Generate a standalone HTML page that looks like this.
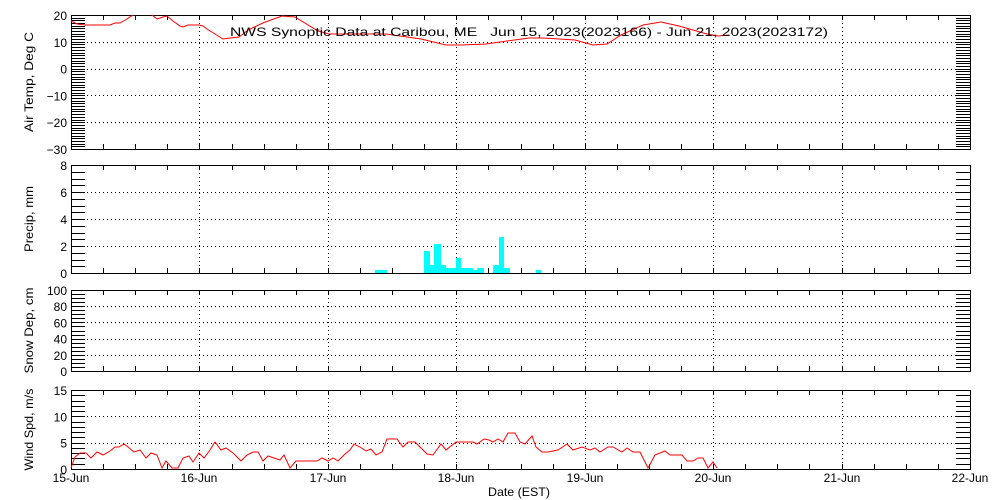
<!DOCTYPE html>
<html><head><meta charset="utf-8"><style>
html,body{margin:0;padding:0;background:#fff;width:1000px;height:500px;overflow:hidden}
svg{display:block}
text{font-family:"Liberation Sans",sans-serif;font-size:12px;fill:#000}
</style></head><body>
<svg id="s" width="1000" height="500" xmlns="http://www.w3.org/2000/svg"></svg>
<script>
var s=document.getElementById('s'),h='';
var X0=71,X1=970,D=(X1-X0)/7;
function L(x1,y1,x2,y2,extra){h+='<line x1="'+x1+'" y1="'+y1+'" x2="'+x2+'" y2="'+y2+'" stroke="#000" stroke-width="1" '+(extra||'')+'/>';}
function T(x,y,t,a){h+='<text x="'+x+'" y="'+y+'" text-anchor="'+(a||'end')+'">'+t+'</text>';}
function panel(top,bot,vmin,vmax,major,minor,label,labs,lw){
  var sc=(bot-top)/(vmax-vmin);
  function Y(v){return bot-(v-vmin)*sc;}
  for(var d=1;d<7;d++){var x=Math.round(X0+d*D)+.5;L(x,top,x,bot,'stroke-dasharray="1,3"');}
  for(var v=vmin+major;v<vmax-1e-6;v+=major){var y=Math.round(Y(v))+.5;L(X0,y,X1,y,'stroke-dasharray="1,3"');}
  for(var v=vmin;v<=vmax+1e-6;v+=minor){var y=Math.round(Y(v))+.5;L(X0,y,X0+14,y);L(X1-14,y,X1,y);}
  for(var i=1;i<28;i++){var x=Math.round(X0+i*D/4)+.5;L(x,top,x,top+5);L(x,bot-5,x,bot);}
  h+='<rect x="'+(X0+.5)+'" y="'+(top+.5)+'" width="'+(X1-X0)+'" height="'+(bot-top)+'" fill="none" stroke="#000"/>';
  for(var i=0;i<labs.length;i++){var v=labs[i];T(67,Y(v)+5,(v<0?'\u2212'+(-v):v));}
  h+='<text transform="translate(33,'+((top+bot)/2)+') rotate(-90)" text-anchor="middle" textLength="'+lw+'" lengthAdjust="spacingAndGlyphs">'+label+'</text>';
  return Y;
}
var Y1=panel(15,149,-30,20,10,1,'Air Temp, Deg C',[20,10,0,-10,-20,-30],100);
var Y2=panel(165,273,0,8,2,0.5,'Precip, mm',[8,6,4,2,0],66);
var Y3=panel(290,371,0,100,20,5,'Snow Dep, cm',[100,80,60,40,20,0],86);
var Y4=panel(390,469,0,15,5,1,'Wind Spd, m/s',[15,10,5,0],82);
var bars=[[375,387,270],[424,430,251],[430,434,265],[434,441,244],[441,446,265],[446,456,268],[456,461,258],[461,473,268],[473,477,270],[477,484,268],[493,499,265],[499,504,237],[504,510,268],[536,541,270]];
bars.forEach(function(b){h+='<rect x="'+b[0]+'" y="'+b[2]+'" width="'+(b[1]-b[0])+'" height="'+(273-b[2])+'" fill="#00ffff"/>';});
var tp=[[71,21],[77,24],[85,25],[110,25],[115,23],[120,23],[127,19],[133,15],[135,13],[150,13],[152,15],[157,19],[163,17],[167,16],[173,21],[180,26],[183,27],[188,25],[199,25],[203,26],[207,29],[215,34],[223,39],[230,38],[239,37],[248,30],[264,22.5],[282,16],[295,17],[318,31],[329,34],[361,34],[386,34],[400,36],[421,39],[446,45],[461,45],[486,44],[507,41],[529,38],[543,38],[575,40],[593,45],[607,44],[621,35],[643,25],[661,22],[679,26],[707,34],[718,36],[729,35]];
h+='<svg x="71" y="15" width="899" height="134" viewBox="71 15 899 134" overflow="hidden"><polyline fill="none" stroke="#f00" stroke-width="1" points="'+tp.map(function(p){return p.join(',')}).join(' ')+'"/></svg>';
var wp=[[71,468],[75,457],[80,453],[86,453],[91,458],[97,452],[103,455],[110,451],[115,447],[119,447],[124,444],[128,447],[134,452],[140,450],[146,458],[151,453],[157,455],[162,468],[166,461],[172,468],[178,468],[183,458],[189,456],[193,462],[199,453],[204,458],[210,450],[215,442],[221,450],[226,448],[233,453],[241,461],[247,455],[253,452],[258,452],[263,461],[268,456],[280,460],[284,455],[290,468],[296,461],[317,461],[322,458],[328,461],[333,458],[338,461],[345,454],[350,450],[354,444],[360,447],[366,451],[371,449],[376,455],[382,452],[387,439],[397,439],[403,447],[408,442],[415,442],[420,447],[427,454],[433,455],[441,444],[446,450],[456,442],[473,442],[477,444],[484,439],[489,440],[493,442],[498,439],[503,442],[508,433],[515,433],[520,442],[525,444],[532,436],[536,447],[542,452],[548,452],[558,450],[567,444],[573,450],[582,447],[590,450],[595,448],[600,452],[608,447],[613,447],[622,452],[627,448],[633,452],[640,452],[648,468],[655,455],[665,451],[670,455],[682,455],[687,461],[693,461],[698,458],[703,458],[708,468],[713,462],[717,468]];
h+='<polyline fill="none" stroke="#f00" stroke-width="1" points="'+wp.map(function(p){return p.join(',')}).join(' ')+'"/>';
var days=['15-Jun','16-Jun','17-Jun','18-Jun','19-Jun','20-Jun','21-Jun','22-Jun'];
for(var d=0;d<8;d++)T(Math.round(X0+d*D),482,days[d],'middle');
h+='<text x="488" y="496" textLength="62" lengthAdjust="spacingAndGlyphs">Date (EST)</text>'.replace('<text','<text text-anchor="start"');
h+='<text x="230" y="36" text-anchor="start" textLength="598" lengthAdjust="spacingAndGlyphs">NWS Synoptic Data at Caribou, ME&#160;&#160;&#160;Jun 15, 2023(2023166) - Jun 21, 2023(2023172)</text>';
s.innerHTML=h;
</script>
</body></html>
